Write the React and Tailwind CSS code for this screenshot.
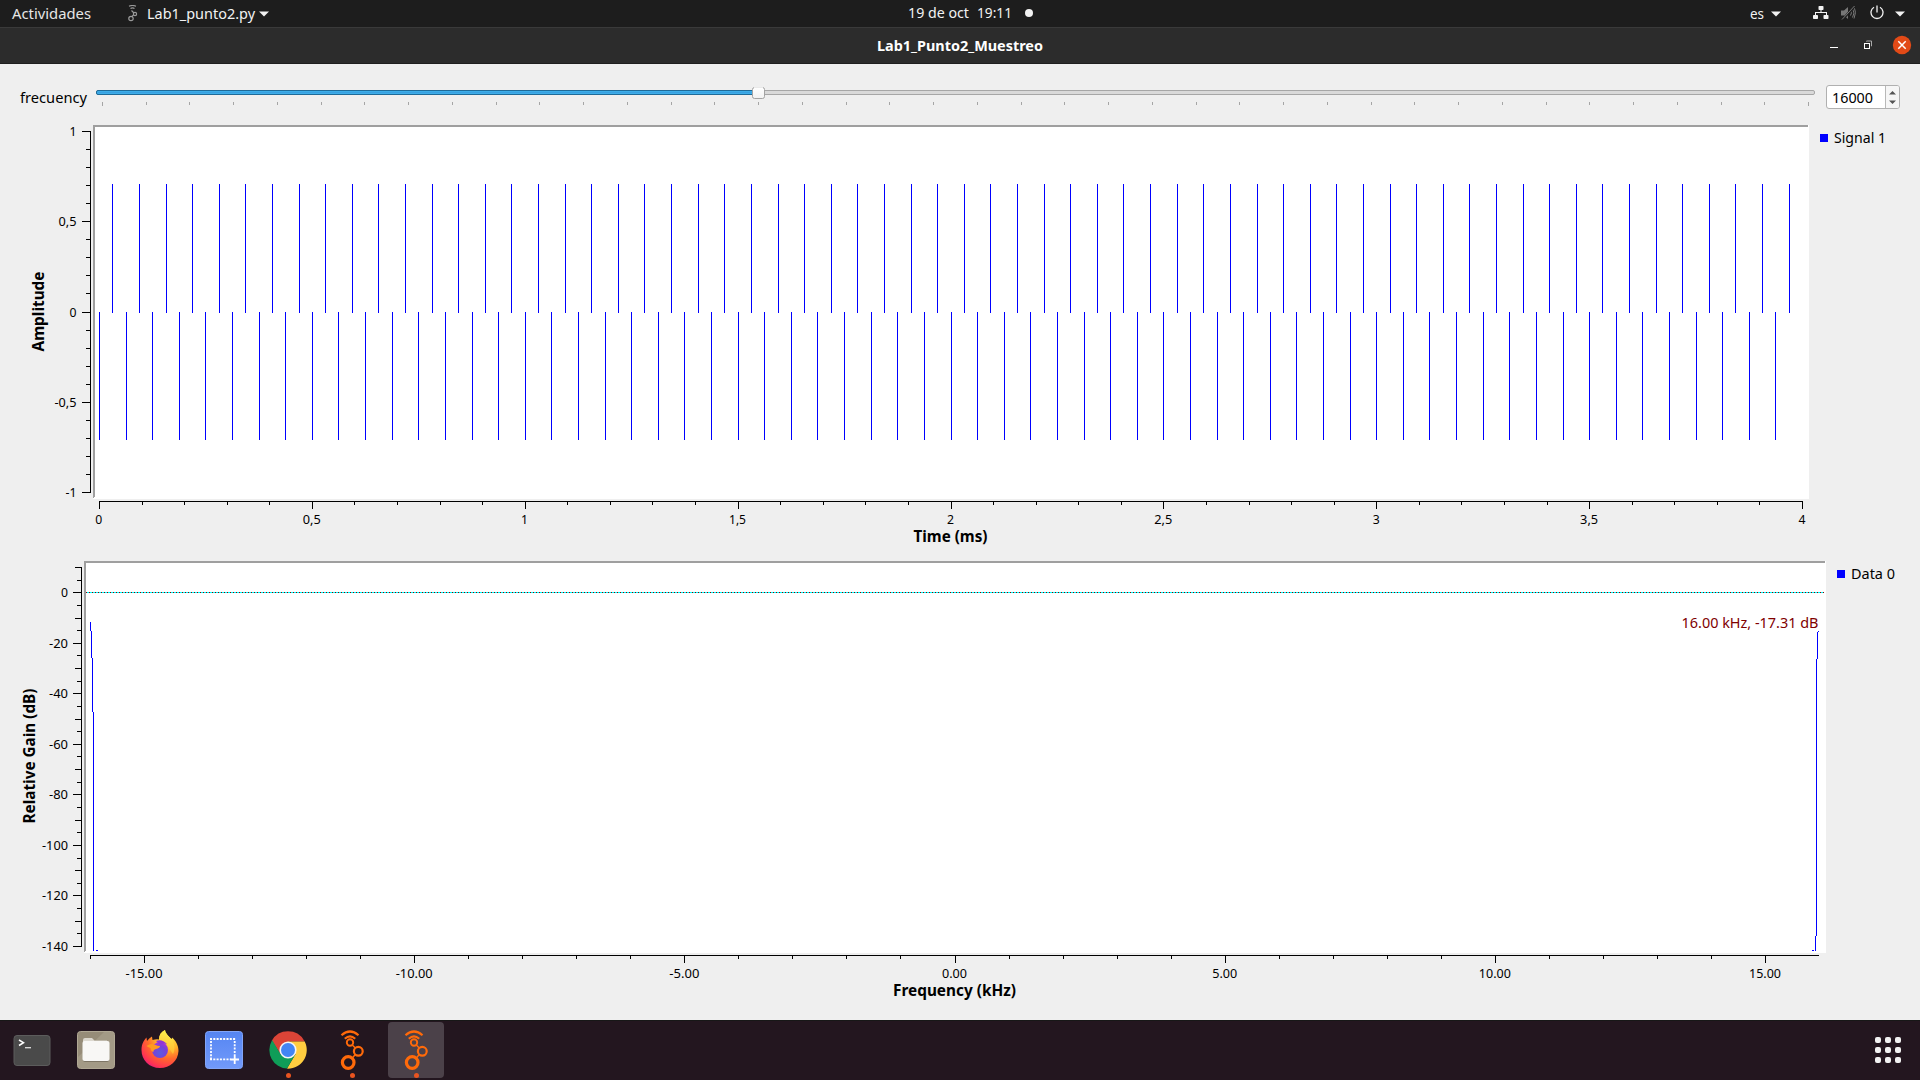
import React from "react";

const FONT = "'Noto Sans','Open Sans',sans-serif";

const range = (n) => Array.from({ length: n }, (_, i) => i);
const px = (v) => Math.floor(v + 0.5);

/* Text with a fixed advance width, aligned on its baseline */
function Label({ x, y, w, size = 12.8, anchor = "middle", fill = "#000", weight = 400, children, transform }) {
  return (
    <text
      x={x}
      y={y}
      textLength={w}
      lengthAdjust="spacingAndGlyphs"
      textAnchor={anchor}
      fontSize={size}
      fontWeight={weight}
      fill={fill}
      transform={transform}
      style={{ fontFamily: FONT }}
    >
      {children}
    </text>
  );
}

function HText({ w, h = 20, base = 15, size = 14, weight = 400, fill = "#000", children }) {
  return (
    <svg width={w} height={h} className="block shrink-0 overflow-visible">
      <Label x={0} y={base} w={w} size={size} weight={weight} fill={fill} anchor="start">
        {children}
      </Label>
    </svg>
  );
}

function Caret() {
  return (
    <svg width="10" height="6" className="block shrink-0">
      <path d="M0 .5h10L5 5.5z" fill="#f2f2f2" />
    </svg>
  );
}

function TopBar() {
  return (
    <header className="flex h-[27px] shrink-0 items-start bg-[#1d1d1d]">
      <div className="flex w-[900px] items-start pl-3">
        <HText w={79} h={27} base={19} size={14.500} fill="#e6e6e6">Actividades</HText>
        <svg width="10" height="17" className="mt-[5px] ml-[37px] block" fill="none" stroke="#9a9a9a" strokeWidth="1.2">
          <path d="M1 1.2Q4.500 -.2 8 1.200M2.500 3.500Q4.500 2.300 6.500 3.500M3.500 5.500 6 8M5.500 10 4 11.500" />
          <circle cx="7" cy="9" r="1.600" />
          <circle cx="3" cy="13.500" r="2.200" />
        </svg>
        <div className="ml-[9px]">
          <HText w={108} h={27} base={19} size={14.500} fill="#f2f2f2">Lab1_punto2.py</HText>
        </div>
        <div className="mt-[11px] ml-[4px]"><Caret /></div>
      </div>
      <div className="flex items-start pl-[8px]">
        <HText w={61} h={27} base={18} size={14.500} fill="#f2f2f2">19 de oct</HText>
        <div className="ml-2">
          <HText w={35} h={27} base={18} size={14.500} fill="#f2f2f2">19:11</HText>
        </div>
        <div className="mt-[9px] ml-[13px] size-2 rounded-full bg-[#f2f2f2]" />
      </div>
      <div className="ml-auto flex items-start pr-[15px]">
        <HText w={14} h={27} base={19} size={14.500} fill="#f2f2f2">es</HText>
        <div className="mt-[11px] ml-[7px]"><Caret /></div>
        <svg width="16" height="15" className="mt-[5px] ml-8 block" fill="#f2f2f2">
          <rect x="5.500" y="1" width="5" height="4" rx=".8" />
          <rect x="0" y="10" width="5" height="4" rx=".8" />
          <rect x="10.500" y="10" width="5" height="4" rx=".8" />
          <path d="M7.500 5h1v2H14v3h-1V8H3v2H2V7h5.500z" />
        </svg>
        <svg width="16" height="16" className="mt-[5px] ml-[12px] block" fill="none" stroke="#777">
          <path d="M0 5.500h3L7 2v12L3 10.500H0z" fill="#777" stroke="none" />
          <path d="M9.500 5.500q1.800 2.500 0 5M11.500 3.500q3 4.500 0 9M13 1.500q3 6 0 12" />
          <path d="M1.500 14.500 13.500 1.500" stroke="#1d1d1d" strokeWidth="2.500" />
          <path d="M1 14.500 13.500 1" />
        </svg>
        <svg width="14" height="15" className="mt-[5px] ml-[13px] block" fill="none" stroke="#f2f2f2" strokeWidth="1.300">
          <path d="M4 2.300a6 6 0 1 0 6 0M7 .5v7" />
        </svg>
        <div className="mt-[11px] ml-[11px]"><Caret /></div>
      </div>
    </header>
  );
}

function TitleBar() {
  return (
    <div className="flex h-[37px] shrink-0 items-start border-t border-b border-t-[#3a3a3a] border-b-[#1f1f1f] bg-[#2c2c2c]">
      <div className="ml-[877px]">
        <HText w={166} h={35} base={23} size={14.500} weight={700} fill="#fff">Lab1_Punto2_Muestreo</HText>
      </div>
      <svg width="90" height="35" className="mr-0 ml-auto block" fill="none">
        <path d="M0 19.500h8" stroke="#fff" />
        <path d="M36.500 13.500v-.5h5v5h-.5" stroke="#aaa" />
        <rect x="34.500" y="15.500" width="5" height="5" stroke="#fff" />
        <circle cx="72" cy="17" r="9.200" fill="#e24a17" />
        <path d="M68.300 13.300l7.400 7.400M75.700 13.300l-7.400 7.400" stroke="#fff" strokeWidth="1.500" />
      </svg>
    </div>
  );
}

function FrequencyRow() {
  return (
    <div className="flex h-[61px] shrink-0 items-start">
      <div className="mt-6 ml-5">
        <HText w={67} h={20} base={15} size={15}>frecuency</HText>
      </div>
      <svg width="1721" height="24" viewBox="95 86 1721 24" className="mt-[22px] ml-2 block">
        <defs>
          <linearGradient id="knob" x1="0" y1="0" x2="0" y2="1">
            <stop offset="0" stopColor="#fff" />
            <stop offset="1" stopColor="#f2f2f2" />
          </linearGradient>
        </defs>
        <rect x="96.500" y="90.500" width="1718" height="4" rx="1.500" fill="#d9d9d9" stroke="#a6a6a6" />
        <rect x="96.500" y="90.500" width="660" height="4" rx="1.500" fill="#3daee9" stroke="#1f6a98" />
        <path d="M98 92.500H755" stroke="#3a9fe0" />
        {range(40).map((i) => (
          <rect key={i} x={px(102 + i * 43.744)} y="102" width="1" height={i % 39 === 0 ? 4 : 3} fill="#a5a5a5" />
        ))}
        <rect x="752.500" y="87.500" width="12" height="11" rx="2" fill="url(#knob)" stroke="#a3a3a3" />
        <path d="M754 87.500h9" stroke="#e9e9e9" />
      </svg>
      <div className="mt-[21px] ml-[10px] flex h-6 w-[74px] overflow-hidden rounded-[3px] border border-[#b0b0b0] bg-white">
        <div className="w-[59px] border-r border-[#b8b8b8] pl-[5px]">
          <HText w={41} h={22} base={17} size={15}>16000</HText>
        </div>
        <svg width="13" height="22" className="block bg-[#f6f6f6]" fill="#555">
          <path d="M3 8.500h7L6.500 5zM3 14.500h7L6.500 18z" />
        </svg>
      </div>
    </div>
  );
}

const AMP_LABELS = [["1", 1, 7], ["0,5", 0.5, 18], ["0", 0, 7], ["-0,5", -0.5, 22], ["-1", -1, 11]];
const TIME_LABELS = [["0", 7], ["0,5", 18], ["1", 7], ["1,5", 17], ["2", 7], ["2,5", 18], ["3", 7], ["3,5", 18], ["4", 7]];

function TimePlot() {
  return (
    <div className="flex h-[436px] shrink-0 items-start">
      <svg width="1812" height="436" viewBox="0 125 1812 436" className="block shrink-0" shapeRendering="crispEdges">
        <rect x="93" y="125" width="1716" height="374" fill="#fff" />
        <path d="M93 125h1715v1l-1 1H95v370l-2 1z" fill="#9f9f9f" />
        <rect x="90" y="131" width="1" height="362" />
        {range(21).map((i) => (
          <rect key={i} x={i % 5 ? 86 : 82} y={px(131 + i * 18.05)} width={i % 5 ? 5 : 9} height="1" />
        ))}
        <rect x="99" y="501" width="1704" height="1" />
        {range(41).map((i) => (
          <rect key={i} x={px(99 + i * 42.575)} y="501" width="1" height={i % 5 ? 4 : 8} />
        ))}
        {range(128).map((i) => (
          <rect key={i} x={px(99 + i * 13.3047)} y={i % 2 ? 184 : 312} width="1" height={i % 2 ? 129 : 128} fill="#00f" />
        ))}
        {AMP_LABELS.map(([t, v, w]) => (
          <Label key={t} x={76.500} y={Math.floor(312 - v * 180.5) + 5} w={w} anchor="end">{t}</Label>
        ))}
        {TIME_LABELS.map(([t, w], i) => (
          <Label key={t} x={98.800 + i * 212.9} y={524} w={w}>{t}</Label>
        ))}
        <Label x={950.500} y={542} w={74} size={16} weight={700}>Time (ms)</Label>
        <Label x={0} y={0} w={80} size={16} weight={700} transform="translate(44 311.5) rotate(-90)">
          Amplitude
        </Label>
      </svg>
      <Legend>
        <HText w={52} h={20} base={15} size={15}>Signal 1</HText>
      </Legend>
    </div>
  );
}

function Legend({ children }) {
  return (
    <div className="mt-[3px] ml-2 flex items-start">
      <div className="mt-[6px] mr-[6px] size-2 bg-[#00f]" />
      {children}
    </div>
  );
}

const GAIN_LABELS = [[0, 7], [-20, 19], [-40, 19], [-60, 19], [-80, 19], [-100, 26], [-120, 26], [-140, 26]];
const FREQ_LABELS = [["-15.00", 37], ["-10.00", 37], ["-5.00", 30], ["0.00", 25], ["5.00", 25], ["10.00", 32], ["15.00", 32]];

function FrequencyPlot() {
  return (
    <div className="flex h-[459px] shrink-0 items-start">
      <svg width="1829" height="459" viewBox="0 561 1829 459" className="block shrink-0" shapeRendering="crispEdges">
        <rect x="84" y="561" width="1742" height="392" fill="#fff" />
        <path d="M84 561h1741v1l-1 1H86v388l-2 1z" fill="#9f9f9f" />
        <rect x="81" y="567" width="1" height="379" />
        {range(31).map((i) => {
          const len = i % 4 === 2 ? 9 : i % 2 ? 5 : 7;
          return <rect key={i} x={82 - len} y={px(567 + i * 12.6333)} width={len} height="1" />;
        })}
        <rect x="90" y="955" width="1729" height="1" />
        {range(32).map((i) => (
          <rect key={i} x={px(90 + i * 54.033)} y="955" width="1" height={i % 5 === 1 ? 8 : 4} />
        ))}
        <path d="M86 592.500H1824" stroke="#0ff" />
        <path d="M86 592.500H1824" stroke="#8b0000" strokeDasharray="1 2" />
        <g fill="#00f">
          <rect x="90" y="622" width="1" height="9" />
          <rect x="91" y="631" width="1" height="27" />
          <rect x="92" y="658" width="1" height="54" />
          <rect x="93" y="712" width="1" height="239" />
          <rect x="96" y="950" width="2" height="1" />
          <rect x="1818" y="631" width="1" height="1" />
          <rect x="1817" y="632" width="1" height="27" />
          <rect x="1816" y="659" width="1" height="277" />
          <rect x="1815" y="936" width="1" height="15" />
          <rect x="1812" y="950" width="2" height="1" />
        </g>
        {GAIN_LABELS.map(([v, w]) => (
          <Label key={v} x={68} y={Math.round(597 - v * 2.5267)} w={w} anchor="end">{v}</Label>
        ))}
        {FREQ_LABELS.map(([t, w], i) => (
          <Label key={t} x={144 + i * 270.17} y={978} w={w}>{t}</Label>
        ))}
        <Label x={1818.500} y={628} w={137} size={15} anchor="end" fill="#800000">16.00 kHz, -17.31 dB</Label>
        <Label x={954.500} y={996} w={123} size={16} weight={700}>Frequency (kHz)</Label>
        <Label x={0} y={0} w={135} size={16} weight={700} transform="translate(35 756) rotate(-90)">
          Relative Gain (dB)
        </Label>
      </svg>
      <Legend>
        <HText w={44} h={20} base={15} size={15}>Data 0</HText>
      </Legend>
    </div>
  );
}

function TerminalIcon() {
  return (
    <svg width="38" height="38" className="block">
      <rect x="1" y="4.500" width="36" height="30" rx="3" fill="#4a4a4a" stroke="#5c5c5c" />
      <path d="M6 9l4.500 2.700L6 14.500" fill="none" stroke="#fff" strokeWidth="1.500" />
      <path d="M12 16.700h6" stroke="#e0e0e0" strokeWidth="1.300" />
    </svg>
  );
}

function FilesIcon() {
  return (
    <svg width="38" height="38" className="block">
      <rect x=".5" y=".5" width="37" height="37" rx="3" fill="#a39a86" stroke="#b0a894" />
      <path d="M1 26L27 1H4Q1 1 1 4z" fill="#968c78" />
      <path d="M6 20V9q0-2 2-2h7l2.500 2.500H30V20z" fill="#dcd8cf" />
      <rect x="6" y="11" width="26" height="20" rx="2" fill="#7d7565" />
      <rect x="5.500" y="10" width="27" height="20" rx="2" fill="#f8f7f5" />
    </svg>
  );
}

function FirefoxIcon() {
  return (
    <svg width="40" height="40" className="block">
      <defs>
        <radialGradient id="ffBody" cx=".75" cy=".15" r="1">
          <stop offset="0" stopColor="#fff44f" />
          <stop offset=".35" stopColor="#ffb42a" />
          <stop offset=".6" stopColor="#ff6a2b" />
          <stop offset=".85" stopColor="#ff3550" />
          <stop offset="1" stopColor="#e31587" />
        </radialGradient>
        <radialGradient id="ffGlobe" cx=".5" cy=".7" r=".7">
          <stop offset="0" stopColor="#5b5be0" />
          <stop offset=".6" stopColor="#7542d8" />
          <stop offset="1" stopColor="#a834d8" />
        </radialGradient>
        <linearGradient id="ffFlame" x1=".6" y1="0" x2=".5" y2="1">
          <stop offset="0" stopColor="#fff44f" />
          <stop offset="1" stopColor="#ffb52e" />
        </linearGradient>
      </defs>
      <path d="M20 39C9 39 1.500 31 1.500 21 1.500 15 4 11 6.500 8.500L7 12Q9 9 12 7.500L12.500 11Q16 10 19 10.500C19 6 21 3 25 1 25.500 5 29 7 31.500 10 32 9.500 32 9 32 8.500 36 12 38.500 16.500 38.500 22 38 32 30 39 20 39z" fill="url(#ffBody)" />
      <path d="M19 10.500C19 6 21 3 25 1c.5 4 4 6 6.500 10 3 4 4 9 1.500 14l-5-7q-2-5-9-7.500z" fill="url(#ffFlame)" />
      <circle cx="20" cy="21" r="8" fill="url(#ffGlobe)" />
      <path d="M16 12q6-2.500 11 3-5-1.500-7 1z" fill="#9035d5" />
      <path d="M6.500 17q4-3 8-1.500 3 1.500 5.500 1.500 0 2-4 3-3 1-2.500 3-3-1-3-4-2-.5-4-2z" fill="#ff9a1f" />
    </svg>
  );
}

function ScreenshotIcon() {
  return (
    <svg width="38" height="38" className="block">
      <defs>
        <linearGradient id="shot" x1="0" y1="0" x2="0" y2="1">
          <stop offset="0" stopColor="#5585f2" />
          <stop offset="1" stopColor="#729afa" />
        </linearGradient>
      </defs>
      <rect x=".5" y=".5" width="37" height="37" rx="3" fill="url(#shot)" stroke="#82a5f8" />
      <path d="M5 8H31M5 28.300H26M6 10V28M29.700 10V24" fill="none" stroke="#fff" strokeWidth="1.800" strokeDasharray="2 1.300" />
      <path d="M29.700 24v9M25.500 28.500h8.500" stroke="#fff" strokeWidth="1.800" />
    </svg>
  );
}

function ChromeIcon() {
  return (
    <svg width="38" height="38" viewBox="-19 -19 38 38" className="block">
      <path d="M-16.200-9.300A18.700 18.700 0 0 1 16.200-9.300L16.700-8.500H0L-7.400 4.200z" fill="#db4437" />
      <path d="M16.700-8.500A18.700 18.700 0 0 1 0 18.700L-1 18.600 7.400 4.200 0-8.500z" fill="#ffcd40" />
      <path d="M-16.200-9.300A18.700 18.700 0 0 0-1 18.600L7.400 4.200-7.400 4.200-15.800-10z" fill="#0f9d58" />
      <circle r="8.600" fill="#f5f5f5" />
      <circle r="7" fill="#4285f4" />
    </svg>
  );
}

function RadioIcon() {
  return (
    <svg width="26" height="42" className="block" fill="none" stroke="#ff6a0a">
      <path d="M2.500 6.300Q11 -1.300 19.500 6.300M5.800 9.800Q11 4.800 16.200 9.800" strokeWidth="2.200" />
      <circle cx="11" cy="13.500" r="3.200" strokeWidth="1.900" />
      <path d="M13.300 16l3 3M16.300 25.500l-3 3.500" strokeWidth="1.500" />
      <circle cx="19.300" cy="22.300" r="4.400" strokeWidth="2.200" />
      <circle cx="9.200" cy="33.500" r="5.800" strokeWidth="3.200" />
    </svg>
  );
}

function DockItem({ running, active, children }) {
  return (
    <div className="flex h-[60px] w-16 items-center justify-center">
      <div className={`relative flex size-14 items-center justify-center rounded ${active ? "bg-[#4b4149]" : ""}`}>
        {children}
        {running && <span className="absolute bottom-0 left-[25.500px] size-[5px] rounded-full bg-[#e95420]" />}
      </div>
    </div>
  );
}

function Dock() {
  return (
    <footer className="flex h-[60px] shrink-0 items-center bg-[#23161f] shadow-[inset_0_1px_0_#171717]">
      <DockItem><TerminalIcon /></DockItem>
      <DockItem><FilesIcon /></DockItem>
      <DockItem><div className="-mt-[2px]"><FirefoxIcon /></div></DockItem>
      <DockItem><ScreenshotIcon /></DockItem>
      <DockItem running><ChromeIcon /></DockItem>
      <DockItem running><RadioIcon /></DockItem>
      <DockItem running active><RadioIcon /></DockItem>
      <div className="mr-[19px] ml-auto grid grid-cols-3 gap-1">
        {range(9).map((i) => (
          <span key={i} className="size-[6px] rounded-[2px] bg-[#f2f2f2]" />
        ))}
      </div>
    </footer>
  );
}

export default function App() {
  return (
    <div className="flex h-[1080px] w-[1920px] flex-col overflow-hidden bg-[#efefef]">
      <TopBar />
      <TitleBar />
      <FrequencyRow />
      <TimePlot />
      <FrequencyPlot />
      <Dock />
    </div>
  );
}
